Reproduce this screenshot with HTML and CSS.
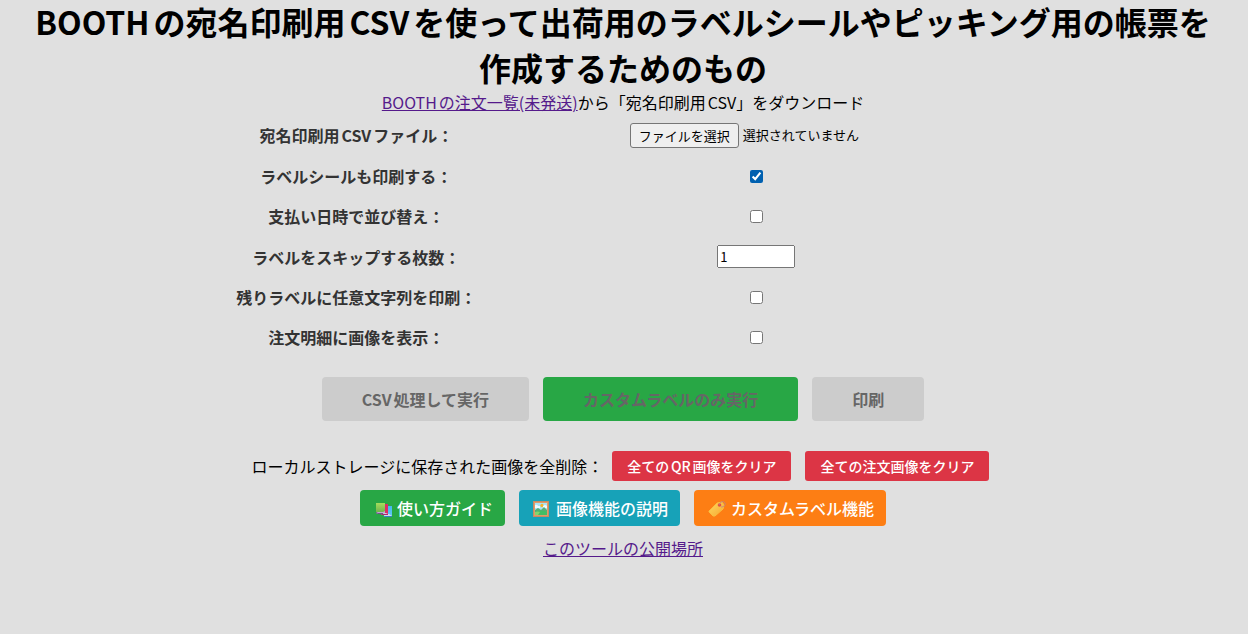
FILE: index.html
```html
<!DOCTYPE html>
<html lang="ja">
<head>
<meta charset="utf-8">
<title>BOOTH ラベル印刷</title>
<link rel="stylesheet" href="styles.css">
</head>
<body>
<main class="page">
  <h1 class="title">BOOTHの宛名印刷用CSVを使って出荷用のラベルシールやピッキング用の帳票を作成するためのもの</h1>
  <p class="lead"><a href="#orders">BOOTHの注文一覧(未発送)</a>から「宛名印刷用CSV」をダウンロード</p>
  <form class="settings">
    <label class="name" for="csv">宛名印刷用CSVファイル：</label>
    <div class="value">
      <div class="picker">
        <span class="picker-button" aria-hidden="true">ファイルを選択</span>
        <span aria-hidden="true">選択されていません</span>
        <input class="picker-input" type="file" id="csv">
      </div>
    </div>
    <label class="name" for="label">ラベルシールも印刷する：</label>
    <div class="value"><input class="check" type="checkbox" id="label" checked></div>
    <label class="name" for="sort">支払い日時で並び替え：</label>
    <div class="value"><input class="check" type="checkbox" id="sort"></div>
    <label class="name" for="skip">ラベルをスキップする枚数：</label>
    <div class="value"><input class="number" type="number" id="skip" value="1"></div>
    <label class="name" for="custom">残りラベルに任意文字列を印刷：</label>
    <div class="value"><input class="check" type="checkbox" id="custom"></div>
    <label class="name" for="image">注文明細に画像を表示：</label>
    <div class="value"><input class="check" type="checkbox" id="image"></div>
  </form>
  <div class="actions">
    <button class="action" type="button" disabled>CSV処理して実行</button>
    <button class="action go" type="button" disabled>カスタムラベルのみ実行</button>
    <button class="action" type="button" disabled>印刷</button>
  </div>
  <div class="storage">
    <span>ローカルストレージに保存された画像を全削除：</span>
    <button class="clear" type="button">全てのQR画像をクリア</button>
    <button class="clear" type="button">全ての注文画像をクリア</button>
  </div>
  <nav class="guides">
    <a class="guide green" href="#guide">
      <svg class="icon" viewBox="0 0 21 21" aria-hidden="true">
        <defs>
          <linearGradient id="leaf" x2="0" y2="1"><stop stop-color="#a5dc5c"/><stop offset="1" stop-color="#70b54c"/></linearGradient>
          <linearGradient id="sky" x2="0" y2="1"><stop stop-color="#43b8ee"/><stop offset="1" stop-color="#62c9f5"/></linearGradient>
        </defs>
        <path d="M15 8h5v10h-5z" fill="url(#sky)"/>
        <path d="M11 16h6l3 2v1h-7z" fill="#d1d9f0"/><path d="M11 18l2 1h7v-1h-6z" fill="#367fc5"/>
        <path d="M10 6h6v10h-6z" fill="#dd2b64"/>
        <path d="M8 15h6l2 1v1h-6z" fill="#d6c5df"/><path d="M8 16l2 1h6v-1h-5z" fill="#a72b70"/>
        <path d="M4 5h9v9H4z" fill="url(#leaf)"/>
        <path d="M4 14h7l2-1v2l-2 1H5z" fill="#b9add0"/><path d="M4 14v1l2 1h5v-1H6z" fill="#75518a"/>
      </svg>使い方ガイド</a>
    <a class="guide teal" href="#images">
      <svg class="icon" viewBox="0 0 21 21" aria-hidden="true">
        <path d="M2 3h16v16H2z" fill="#c98b62"/><path d="M3 4h14v14H3z" fill="#e19b69"/>
        <path d="M4 5h12v12H4z" fill="#a8e5f6"/><circle cx="11" cy="7.5" r="1.7" fill="#f5b52d"/>
        <path d="M4 7q2-1 3 1h2v2H4zM12 8q2-2 4 0v2h-4z" fill="#effaff"/>
        <path d="M4 12l3-2 3 2 3-3 3 3v5H4z" fill="#55ae75"/><path d="M4 15q6-4 12-1v3H4z" fill="#43bd65"/>
        <path d="M4 14q3-1 5 0l-2 3H4z" fill="#85d66c"/>
      </svg>画像機能の説明</a>
    <a class="guide orange" href="#labels">
      <svg class="icon" viewBox="0 0 21 21" aria-hidden="true">
        <defs><linearGradient id="gold" x2="1" y2="1"><stop stop-color="#ffd95d"/><stop offset="1" stop-color="#f5a832"/></linearGradient></defs>
        <path d="M3 13l8-8 5-1 2 3-1 4-8 7-2 0-4-4z" fill="url(#gold)" stroke="#f9bd3e" stroke-linejoin="round"/>
        <circle cx="13.5" cy="7" r="1.8" fill="#e45045"/>
        <path d="M13 7c1-4 5-4 6-2s-1 4-4 4" fill="none" stroke="#b9848f" stroke-width=".8"/>
      </svg>カスタムラベル機能</a>
  </nav>
  <p class="source"><a href="#source">このツールの公開場所</a></p>
</main>
</body>
</html>
```
FILE: styles.css
```css
* { box-sizing: border-box; }
body { margin: 0; background: #e0e0e0; color: #000; font: 16px/24px "Noto Sans CJK JP", sans-serif; text-align: center; text-autospace: normal; }
.page { display: flow-root; margin-top: -2px; padding-right: 2px; }
.title { margin: 0; padding: 0 32px; font-size: 32px; line-height: 46px; }
.lead, .source { margin: 0; }
a { color: #551a8b; }
.settings { display: grid; grid-template-columns: 1fr 2fr; grid-template-rows: 42px 40px 40px 41px 40px 40px; width: 800px; max-width: 100%; margin: 0 auto; }
.name, .value { display: flex; align-items: center; justify-content: center; }
.name { font-weight: 700; color: #333; }
.picker { position: relative; display: flex; align-items: center; gap: 4px; width: 253px; font-size: 13px; }
.picker-button { border: 1px solid #767676; border-radius: 3px; padding: 2px 8px; background: #efefef; line-height: 19px; }
.picker-input { position: absolute; inset: 0; width: 100%; opacity: 0; }
.picker:focus-within { outline: 2px solid #0060b0; }
.check { margin: 0; width: 13px; height: 13px; accent-color: #0060b0; }
.number { width: 78px; height: 23px; padding: 1px; font: 13px "Noto Sans CJK JP", sans-serif; }
.actions { display: flex; flex-wrap: wrap; justify-content: center; gap: 14px; margin-top: 20px; }
.action, .clear { text-autospace: normal; }
.action { border: 0; border-radius: 4px; padding: 10px 40px; background: #ccc; color: #666; font: 700 16px/24px "Noto Sans CJK JP", sans-serif; }
.go { background: #28a745; }
.storage { display: flex; flex-wrap: wrap; justify-content: center; align-items: center; gap: 4px; margin-top: 30px; }
.clear { border: 0; border-radius: 3px; padding: 5px 15px; margin: 0 5px; background: #dc3545; color: #fff; font: 500 14px/20px "Noto Sans CJK JP", sans-serif; }
.guides { display: flex; flex-wrap: wrap; justify-content: center; gap: 14px; margin: 9px 0 10px; }
.guide { display: flex; align-items: center; gap: 4px; border-radius: 4px; padding: 6px 12px; color: #fff; font-weight: 500; text-decoration: none; }
.icon { width: 21px; height: 21px; }
.green { background: #28a745; }
.teal { background: #17a2b8; }
.orange { background: #fd7e14; }
```
